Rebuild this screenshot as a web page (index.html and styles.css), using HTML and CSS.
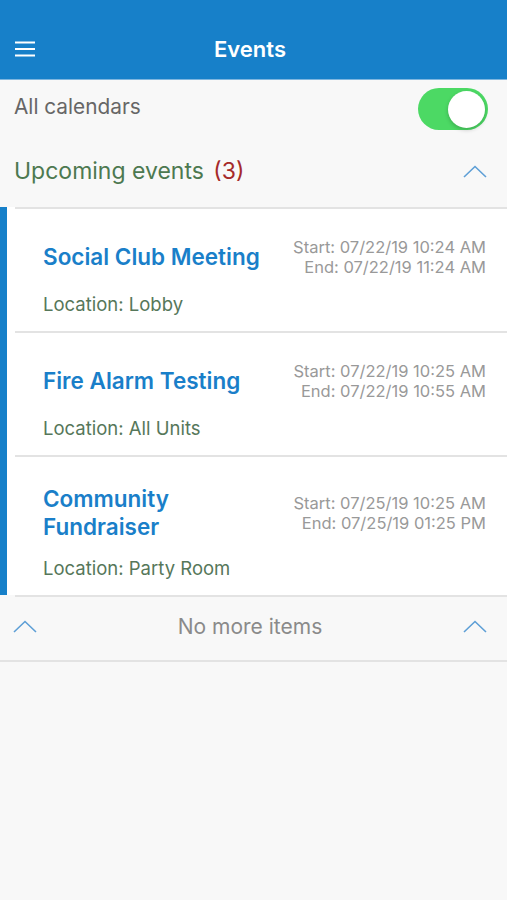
FILE: index.html
```html
<!DOCTYPE html>
<html lang="en">
<head>
  <meta charset="UTF-8" />
  <title>Events</title>
  <meta name="viewport" content="width=device-width, initial-scale=1" />
  <link rel="stylesheet" href="styles.css">
</head>
<body>
  <!-- Top bar -->
  <header class="top-bar">
    <button class="menu-btn" aria-label="Menu">
      <svg width="20" height="16" viewBox="0 0 20 16">
        <path d="M0 1.5h20M0 8h20M0 14.5h20" stroke="#fff" stroke-width="2.2" fill="none"/>
      </svg>
    </button>
    <h1>Events</h1>
    <span class="spacer"></span>
  </header>

  <!-- Calendar filter -->
  <div class="filter-row">
    <span class="filter-label">All calendars</span>
    <span class="switch on"><span class="knob"></span></span>
  </div>

  <!-- Section header -->
  <div class="section-head">
    <span class="section-title">Upcoming events <span class="count">(3)</span></span>
    <svg class="chevron" width="24" height="13" viewBox="0 0 24 13">
      <path d="M1 12L12 1.5L23 12" stroke="#5e9fd6" stroke-width="1.6" fill="none"/>
    </svg>
  </div>

  <!-- Event list -->
  <div class="event-list">
    <div class="event-card">
      <div class="event-top">
        <div class="event-title">Social Club Meeting</div>
        <div class="event-dates">
          <div>Start: 07/22/19 10:24 AM</div>
          <div>End: 07/22/19 11:24 AM</div>
        </div>
      </div>
      <div class="event-location">Location: Lobby</div>
    </div>

    <div class="event-card">
      <div class="event-top">
        <div class="event-title">Fire Alarm Testing</div>
        <div class="event-dates">
          <div>Start: 07/22/19 10:25 AM</div>
          <div>End: 07/22/19 10:55 AM</div>
        </div>
      </div>
      <div class="event-location">Location: All Units</div>
    </div>

    <div class="event-card">
      <div class="event-top">
        <div class="event-title">Community<br>Fundraiser</div>
        <div class="event-dates">
          <div>Start: 07/25/19 10:25 AM</div>
          <div>End: 07/25/19 01:25 PM</div>
        </div>
      </div>
      <div class="event-location">Location: Party Room</div>
    </div>
  </div>

  <!-- End of list -->
  <div class="list-end">
    <svg class="chevron" width="24" height="13" viewBox="0 0 24 13">
      <path d="M1 12L12 1.5L23 12" stroke="#5e9fd6" stroke-width="1.6" fill="none"/>
    </svg>
    <span>No more items</span>
    <svg class="chevron" width="24" height="13" viewBox="0 0 24 13">
      <path d="M1 12L12 1.5L23 12" stroke="#5e9fd6" stroke-width="1.6" fill="none"/>
    </svg>
  </div>
</body>
</html>
```

FILE: styles.css
```css
/* -----------------------------------------------
   Reset
   ----------------------------------------------- */
* {
  margin: 0;
  padding: 0;
  box-sizing: border-box;
}

body {
  font-family: Inter, Roboto, "Liberation Sans", sans-serif;
  background: #f8f8f8;
  min-height: 100vh;
}

/* -----------------------------------------------
   Top bar
   ----------------------------------------------- */
.top-bar {
  height: 80px;
  background: #1780c9;
  border-bottom: 1px solid #7fb6df;
  display: flex;
  align-items: flex-end;
  padding: 0 15px 17px 15px;
}
.menu-btn {
  width: 40px;
  background: none;
  border: none;
  display: flex;
  align-items: center;
  padding-bottom: 5px;
}
.top-bar h1 {
  flex: 1;
  text-align: center;
  color: #ffffff;
  font-size: 22px;
  font-weight: 600;
  line-height: 26px;
  padding-right: 7px;
}
.top-bar .spacer {
  width: 40px;
}

/* -----------------------------------------------
   Filter row with switch
   ----------------------------------------------- */
.filter-row {
  display: flex;
  align-items: center;
  justify-content: space-between;
  padding: 6px 19px 0 14px;
  height: 52px;
}
.filter-label {
  font-size: 20.8px;
  color: #666666;
  margin-top: -5px;
}
.switch {
  width: 70px;
  height: 42px;
  border-radius: 21px;
  background: #4cd964;
  display: flex;
  align-items: center;
  justify-content: flex-end;
  padding: 0 3px;
}
.switch .knob {
  width: 37px;
  height: 37px;
  border-radius: 50%;
  background: #ffffff;
  box-shadow: 0 2px 4px rgba(0, 0, 0, 0.2);
}

/* -----------------------------------------------
   Section header
   ----------------------------------------------- */
.section-head {
  display: flex;
  align-items: center;
  justify-content: space-between;
  padding: 3px 20px 0 14px;
  height: 75px;
}
.section-title {
  font-size: 23px;
  color: #4d7950;
}
.section-title .count {
  color: #a52a2a;
  margin-left: 3px;
}

/* -----------------------------------------------
   Event list
   ----------------------------------------------- */
.event-list {
  background: #ffffff;
  border-left: 7px solid #1780c9;
  padding-left: 8px;
}
.event-card {
  border-top: 2px solid #e3e3e3;
  padding: 28px 21px 15px 28px;
}
.event-top {
  display: flex;
  align-items: center;
  justify-content: space-between;
}
.event-title {
  color: #1a7fc9;
  font-size: 22.5px;
  font-weight: 600;
  line-height: 28px;
}
.event-dates {
  text-align: right;
  color: #999999;
  font-size: 16.5px;
  line-height: 20px;
}
.event-location {
  margin-top: 16px;
  color: #56775a;
  font-size: 18.5px;
  line-height: 23px;
}

/* -----------------------------------------------
   End of list
   ----------------------------------------------- */
.list-end {
  border-top: 2px solid #e3e3e3;
  margin-left: 15px;
  display: flex;
  align-items: center;
  justify-content: space-between;
  height: 65px;
  padding: 0 20px 5px 0;
  color: #8a8a8a;
  font-size: 21px;
  position: relative;
}
.list-end .chevron:first-child {
  margin-left: -2px;
}
.list-end::after {
  content: "";
  position: absolute;
  left: -15px;
  right: 0;
  bottom: -2px;
  border-bottom: 2px solid #e3e3e3;
}
```
